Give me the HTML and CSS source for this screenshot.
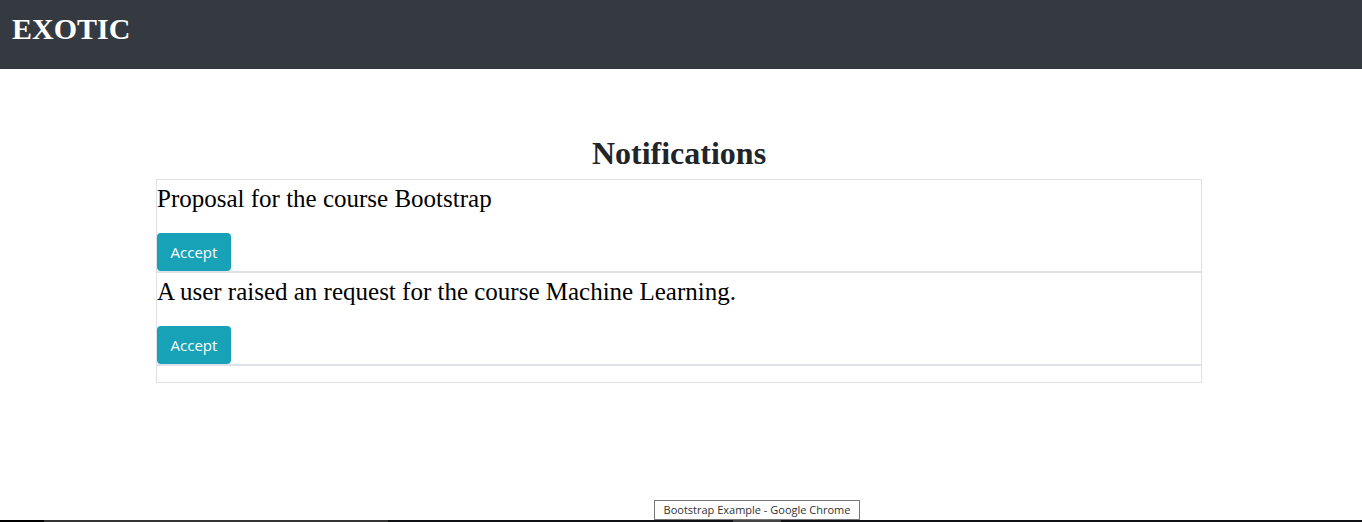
FILE: index.html
```html
<!DOCTYPE html>
<html lang="en">
<head>
<meta charset="utf-8">
<title>Bootstrap Example</title>
<link rel="stylesheet" href="styles.css">
</head>
<body>
<header class="navbar">
  <span class="brand">EXOTIC</span>
</header>
<main class="content">
  <h2 class="title">Notifications</h2>
  <div class="list">
    <div class="item">
      <p class="item-text">Proposal for the course Bootstrap</p>
      <button class="btn-accept">Accept</button>
    </div>
    <div class="item">
      <p class="item-text">A user raised an request for the course Machine Learning.</p>
      <button class="btn-accept">Accept</button>
    </div>
    <div class="item-empty"></div>
  </div>
</main>
<div class="tooltip">Bootstrap Example - Google Chrome</div>
<div class="taskbar">
  <span class="seg seg-a"></span>
  <span class="seg seg-b"></span>
  <span class="seg seg-c"></span>
  <span class="seg seg-d"></span>
  <span class="seg seg-e"></span>
</div>
</body>
</html>
```

FILE: styles.css
```css
html, body {
  margin: 0;
  padding: 0;
  background: #fff;
}
body {
  font-family: "Liberation Serif", "Times New Roman", serif;
  color: #000;
  height: 522px;
  overflow: hidden;
  position: relative;
}
.navbar {
  background: #343a40;
  height: 69px;
  box-sizing: border-box;
  padding: 10px 12px;
}
.brand {
  display: block;
  color: #fff;
  font-weight: bold;
  font-size: 30px;
  line-height: 38px;
}
.content {
  padding-top: 65px;
  margin-left: 156px;
  width: 1046px;
}
.title {
  margin: 0 0 7px;
  text-align: center;
  font-size: 32px;
  line-height: 38px;
  font-weight: bold;
  color: #212529;
}
.list {
  border: 1px solid #dee2e6;
}
.item {
  border-bottom: 2px solid #dee2e6;
  display: flex;
  flex-direction: column;
  align-items: flex-start;
}
.item-text {
  margin: 0 0 16px;
  padding-top: 1px;
  font-size: 25px;
  line-height: 36px;
}
.btn-accept {
  width: 74px;
  height: 38px;
  padding: 0;
  border: 0;
  border-radius: 4px;
  background: #17a2b8;
  color: #fff;
  font-family: "Open Sans", "Noto Sans", sans-serif;
  font-size: 15px;
  line-height: 38px;
  text-align: center;
}
.item-empty {
  height: 16px;
}
.tooltip {
  position: absolute;
  left: 654px;
  top: 500px;
  width: 206px;
  height: 20px;
  box-sizing: border-box;
  border: 1px solid #767676;
  background: #fff;
  color: #333;
  font-family: "Open Sans", "Noto Sans", sans-serif;
  font-size: 11px;
  line-height: 18px;
  text-align: center;
  white-space: nowrap;
}
.taskbar {
  position: absolute;
  left: 0;
  bottom: 0;
  width: 100%;
  height: 2px;
  display: flex;
}
.seg { display: block; height: 2px; }
.seg-a { width: 44px; background: #000; }
.seg-b { width: 344px; background: #333; }
.seg-c { width: 345px; background: #0f1115; }
.seg-d { width: 48px; background: #444; }
.seg-e { flex: 1; background: #0f1115; }
```
